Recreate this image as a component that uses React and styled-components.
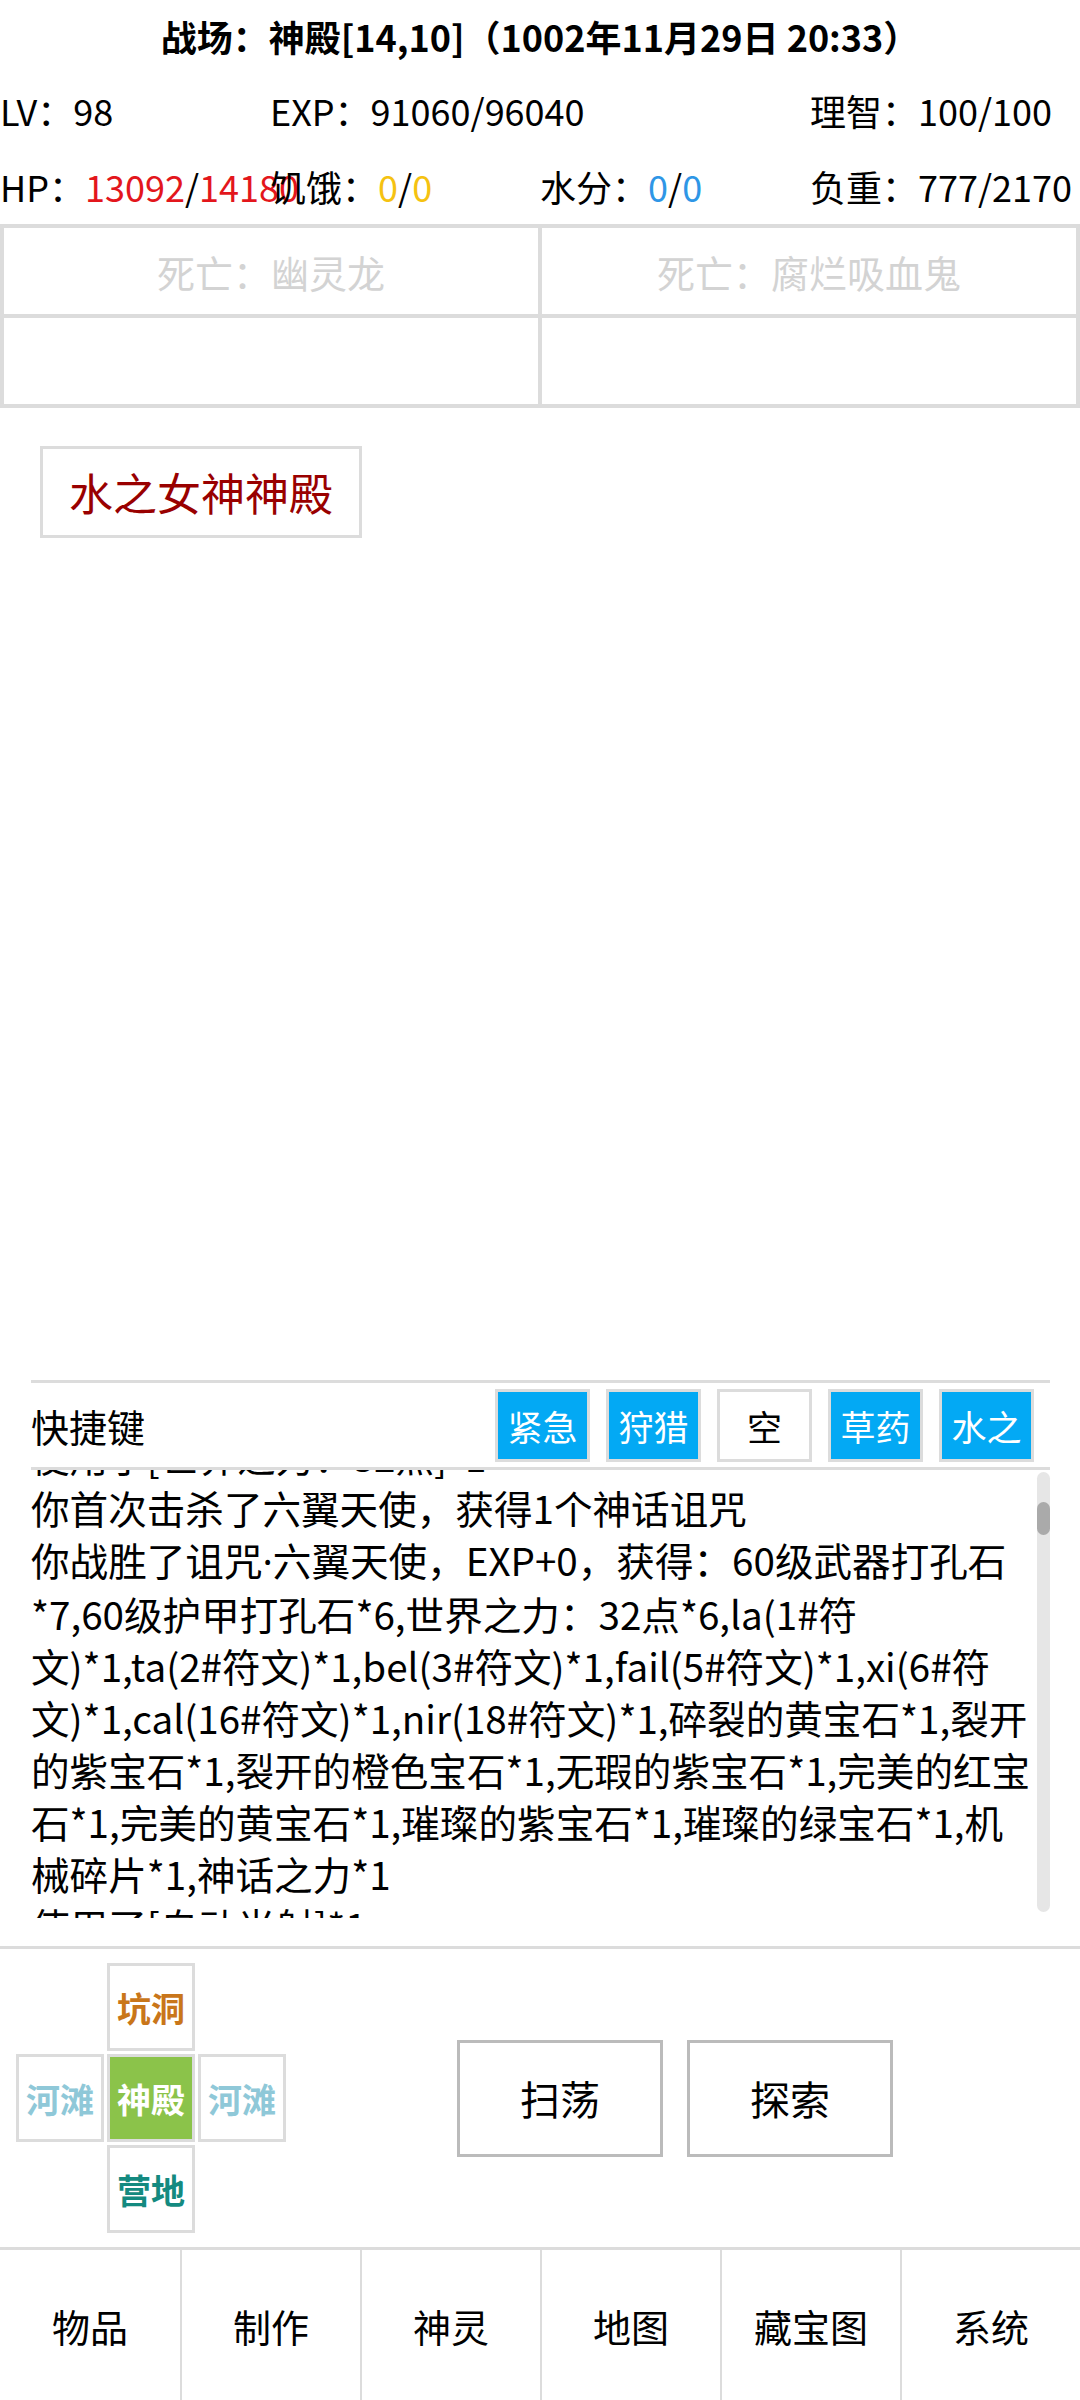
import React, { useLayoutEffect, useRef } from 'react';
import styled, { createGlobalStyle } from 'styled-components';

const GlobalStyle = createGlobalStyle`
    html, body {
        margin: 0;
        padding: 0;
        background: #fff;
    }
    body {
        font-family: "Noto Sans CJK SC", "Noto Sans", sans-serif;
        color: #000;
    }
`;

const Page = styled.div`
    width: 1080px;
    height: 2400px;
    display: flex;
    flex-direction: column;
    background: #fff;
    overflow: hidden;
`;

const Title = styled.div`
    height: 72px;
    display: flex;
    align-items: center;
    justify-content: center;
    font-size: 36px;
    font-weight: 700;
    white-space: nowrap;
`;

const StatsGrid = styled.div`
    display: grid;
    grid-template-columns: repeat(4, 270px);
    grid-auto-rows: 76px;
    align-items: center;
    font-size: 36px;
    white-space: nowrap;
`;

const Stat = styled.div`
    grid-column: span ${p => p.$span || 1};
`;

const Num = styled.span`
    color: ${p => p.$color || '#000'};
`;

const DeathGrid = styled.div`
    display: grid;
    grid-template-columns: 1fr 1fr;
    grid-auto-rows: 86px;
    gap: 4px;
    padding: 4px;
    background: #dcdcdc;
`;

const DeathCell = styled.div`
    background: #fff;
    display: flex;
    align-items: center;
    justify-content: center;
    font-size: 38px;
    color: #d3d3d3;
`;

const Main = styled.div`
    flex: 1;
    padding: 38px 0 0 40px;
`;

const PlaceButton = styled.div`
    width: 322px;
    height: 92px;
    box-sizing: border-box;
    border: 3px solid #dcdcdc;
    display: flex;
    align-items: center;
    justify-content: center;
    font-size: 44px;
    color: #990000;
`;

const ShortcutSection = styled.div`
    margin: 0 30px 28px 31px;
`;

const ShortcutBar = styled.div`
    height: 90px;
    box-sizing: border-box;
    border-top: 3px solid #dcdcdc;
    border-bottom: 3px solid #dcdcdc;
    display: flex;
    align-items: center;
    justify-content: space-between;
    padding-right: 16px;
`;

const BarLabel = styled.div`
    font-size: 38px;
`;

const Keys = styled.div`
    display: flex;
    gap: 16px;
`;

const Key = styled.div`
    width: 95px;
    height: 73px;
    box-sizing: border-box;
    border: 3px solid #dcdcdc;
    background: ${p => (p.$empty ? '#fff' : '#03a9f4')};
    color: ${p => (p.$empty ? '#000' : '#fff')};
    display: flex;
    align-items: center;
    justify-content: center;
    font-size: 35px;
`;

const LogWrap = styled.div`
    display: flex;
    align-items: flex-start;
`;

const Log = styled.div`
    flex: 1;
    height: 448px;
    overflow: hidden;
    font-size: 38.6px;
    line-height: 52px;
    white-space: nowrap;
`;

const Dot = styled.span`
    font-family: "Noto Sans", sans-serif;
`;

const ScrollTrack = styled.div`
    width: 13px;
    height: 440px;
    margin-top: 2px;
    border-radius: 7px;
    background: #e6e6e6;
`;

const ScrollThumb = styled.div`
    height: 33px;
    margin-top: 30px;
    border-radius: 7px;
    background: #aaa;
`;

const MapArea = styled.div`
    height: 301px;
    box-sizing: border-box;
    border-top: 3px solid #dcdcdc;
    display: flex;
    align-items: center;
    padding-left: 16px;
`;

const Cross = styled.div`
    display: grid;
    grid-template-columns: repeat(3, 88px);
    grid-template-rows: repeat(3, 88px);
    gap: 3px;
`;

const Cell = styled.div`
    grid-column: ${p => p.$col};
    grid-row: ${p => p.$row};
    box-sizing: border-box;
    border: 3px solid #dcdcdc;
    background: ${p => p.$bg || '#fff'};
    color: ${p => p.$color};
    display: flex;
    align-items: center;
    justify-content: center;
    font-size: 34px;
    font-weight: 700;
`;

const Actions = styled.div`
    margin-left: 171px;
    display: flex;
    gap: 24px;
`;

const ActionButton = styled.div`
    width: 206px;
    height: 117px;
    box-sizing: border-box;
    border: 3px solid #bbb;
    display: flex;
    align-items: center;
    justify-content: center;
    font-size: 40px;
`;

const Nav = styled.div`
    height: 153px;
    box-sizing: border-box;
    border-top: 3px solid #dcdcdc;
    display: grid;
    grid-template-columns: repeat(6, 1fr);
`;

const NavItem = styled.div`
    display: flex;
    align-items: center;
    justify-content: center;
    font-size: 38px;
    & + & {
        border-left: 2px solid #dcdcdc;
    }
`;

const keys = [
    { label: '紧急' },
    { label: '狩猎' },
    { label: '空', empty: true },
    { label: '草药' },
    { label: '水之' },
];

// entries shown in the message log; a long one is kept as its wrapped lines
const log = [
    '使用了[世界之力：32点]*1',
    '你首次击杀了六翼天使，获得1个神话诅咒',
    [
        '你战胜了诅咒·六翼天使，EXP+0，获得：60级武器打孔石',
        '*7,60级护甲打孔石*6,世界之力：32点*6,la(1#符',
        '文)*1,ta(2#符文)*1,bel(3#符文)*1,fail(5#符文)*1,xi(6#符',
        '文)*1,cal(16#符文)*1,nir(18#符文)*1,碎裂的黄宝石*1,裂开',
        '的紫宝石*1,裂开的橙色宝石*1,无瑕的紫宝石*1,完美的红宝',
        '石*1,完美的黄宝石*1,璀璨的紫宝石*1,璀璨的绿宝石*1,机',
        '械碎片*1,神话之力*1',
    ],
    '使用了[自动光射]*1',
];

const navItems = ['物品', '制作', '神灵', '地图', '藏宝图', '系统'];

function withDots(text) {
    const parts = text.split('·');
    return parts.map((p, i) => (
        <React.Fragment key={i}>
            {i > 0 && <Dot>·</Dot>}
            {p}
        </React.Fragment>
    ));
}

function App() {
    const logRef = useRef(null);
    useLayoutEffect(() => {
        if (logRef.current) logRef.current.scrollTop = 41;
    }, []);

    return (
        <Page>
            <GlobalStyle />
            <Title>战场：神殿[14,10]（1002年11月29日 20:33）</Title>
            <StatsGrid>
                <Stat>LV：98</Stat>
                <Stat $span={2}>EXP：91060/96040</Stat>
                <Stat>理智：100/100</Stat>
                <Stat>
                    HP：<Num $color="#e3161c">13092</Num>/<Num $color="#e3161c">14180</Num>
                </Stat>
                <Stat>
                    饥饿：<Num $color="#f5c211">0</Num>/<Num $color="#f5c211">0</Num>
                </Stat>
                <Stat>
                    水分：<Num $color="#2e96e6">0</Num>/<Num $color="#2e96e6">0</Num>
                </Stat>
                <Stat>负重：777/2170</Stat>
            </StatsGrid>
            <DeathGrid>
                <DeathCell>死亡：幽灵龙</DeathCell>
                <DeathCell>死亡：腐烂吸血鬼</DeathCell>
                <DeathCell />
                <DeathCell />
            </DeathGrid>
            <Main>
                <PlaceButton>水之女神神殿</PlaceButton>
            </Main>
            <ShortcutSection>
                <ShortcutBar>
                    <BarLabel>快捷键</BarLabel>
                    <Keys>
                        {keys.map(k => (
                            <Key key={k.label} $empty={k.empty}>{k.label}</Key>
                        ))}
                    </Keys>
                </ShortcutBar>
                <LogWrap>
                    <Log ref={logRef}>
                        {log.map((entry, i) => (
                            <div key={i}>
                                {Array.isArray(entry)
                                    ? entry.map((line, j) => (
                                          <React.Fragment key={j}>
                                              {j > 0 && <br />}
                                              {withDots(line)}
                                          </React.Fragment>
                                      ))
                                    : withDots(entry)}
                            </div>
                        ))}
                    </Log>
                    <ScrollTrack>
                        <ScrollThumb />
                    </ScrollTrack>
                </LogWrap>
            </ShortcutSection>
            <MapArea>
                <Cross>
                    <Cell $col={2} $row={1} $color="#c9761a">坑洞</Cell>
                    <Cell $col={1} $row={2} $color="#8fc8d8">河滩</Cell>
                    <Cell $col={2} $row={2} $bg="#8bc34a" $color="#fff">神殿</Cell>
                    <Cell $col={3} $row={2} $color="#8fc8d8">河滩</Cell>
                    <Cell $col={2} $row={3} $color="#148a80">营地</Cell>
                </Cross>
                <Actions>
                    <ActionButton>扫荡</ActionButton>
                    <ActionButton>探索</ActionButton>
                </Actions>
            </MapArea>
            <Nav>
                {navItems.map(n => (
                    <NavItem key={n}>{n}</NavItem>
                ))}
            </Nav>
        </Page>
    );
}

export default App;
